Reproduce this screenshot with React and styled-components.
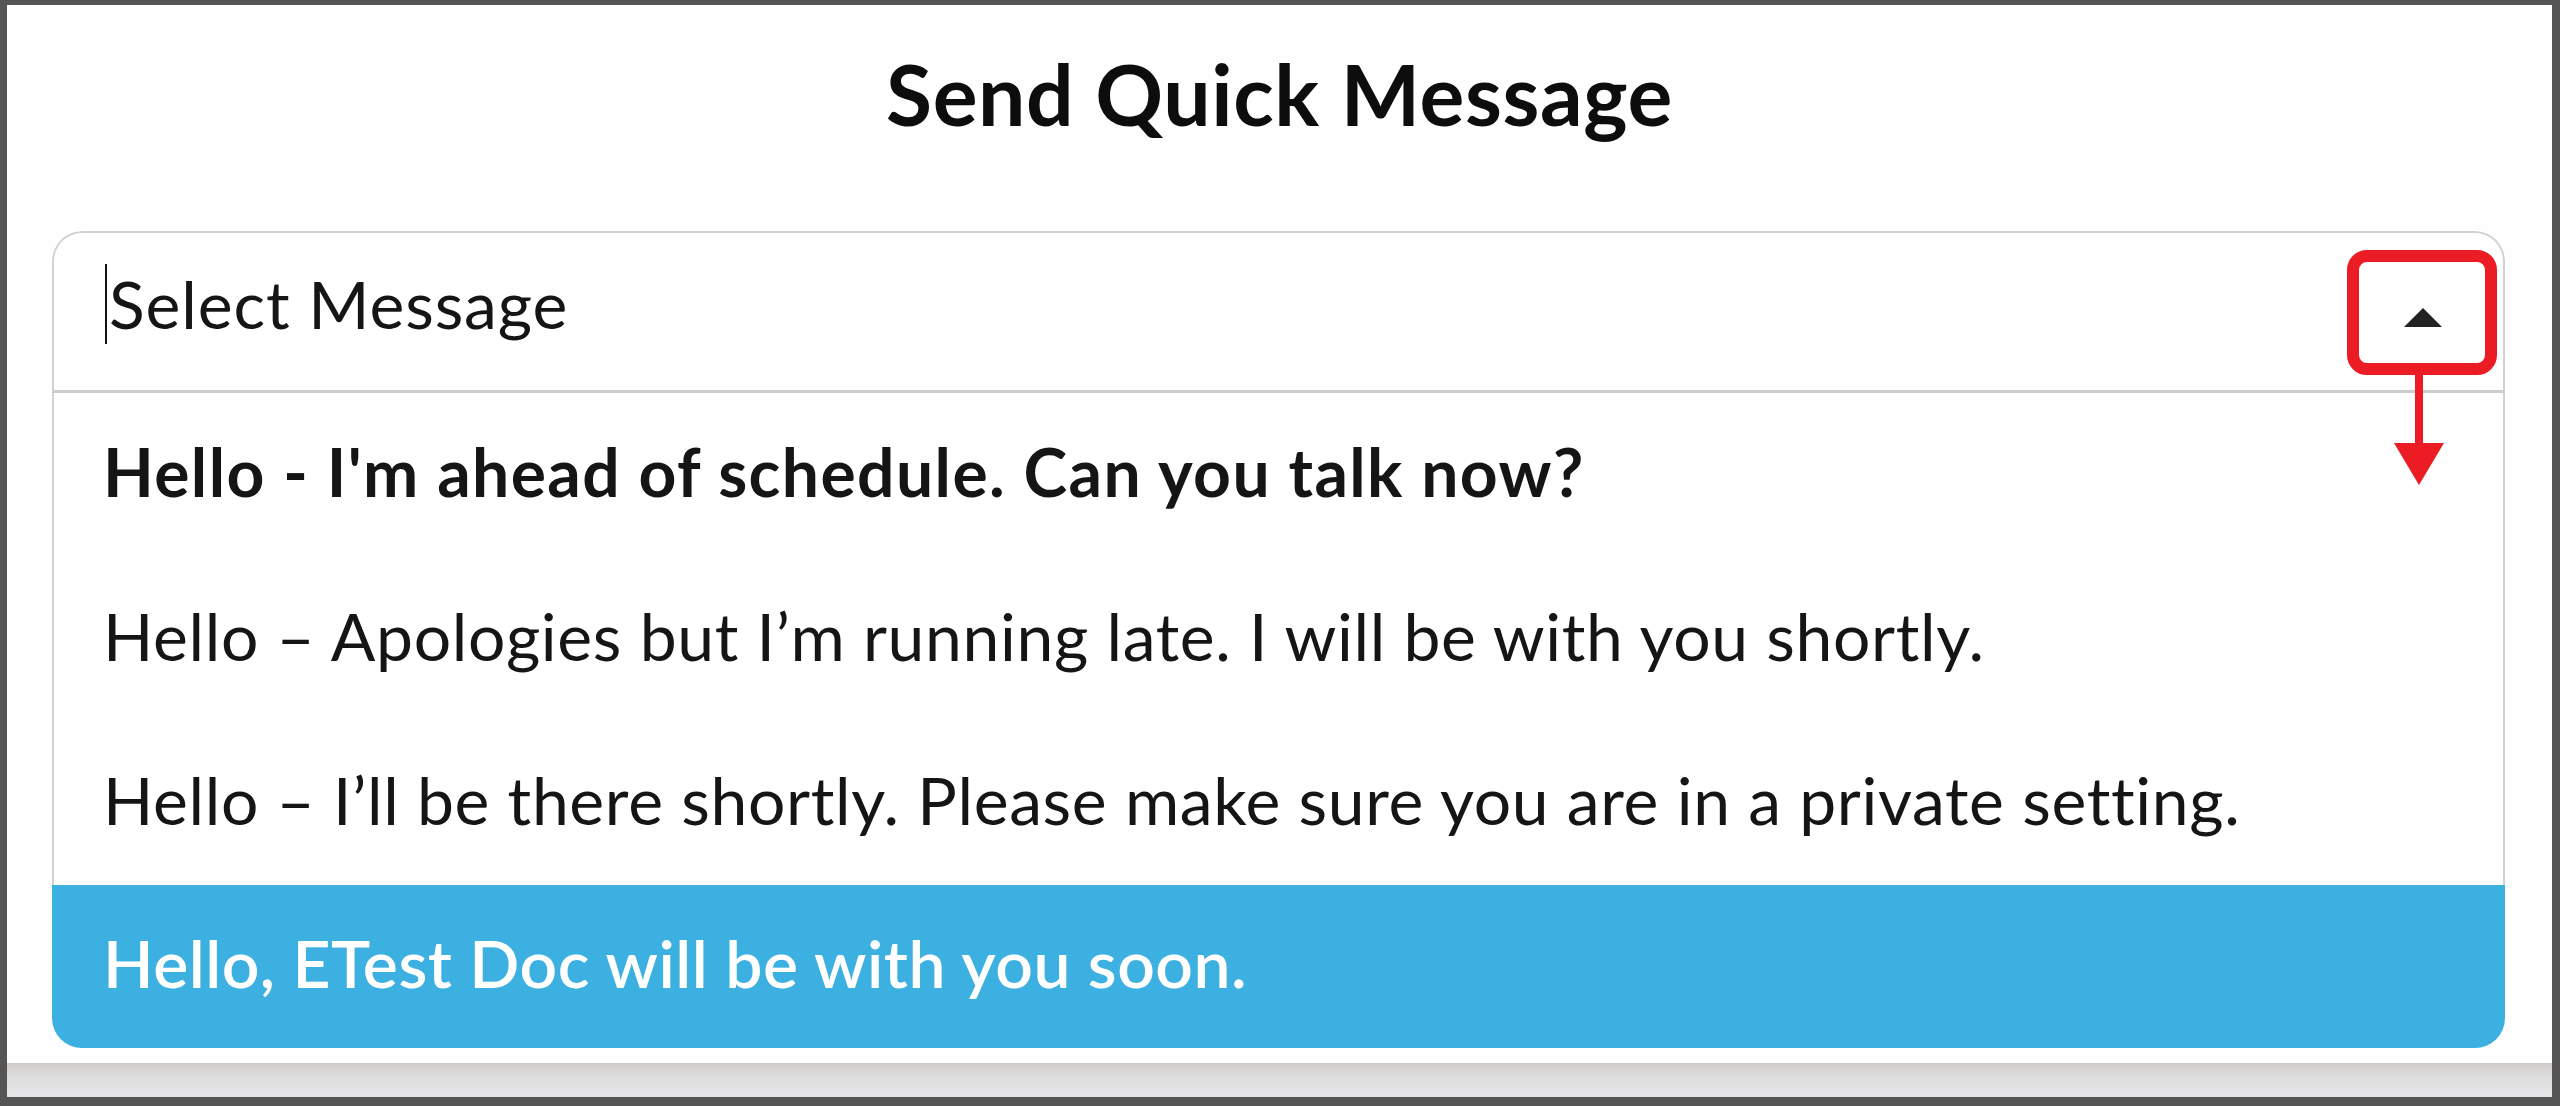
import React from "react";
import styled, { createGlobalStyle } from "styled-components";

const Global = createGlobalStyle`
  html, body { margin: 0; padding: 0; background: #ffffff; }
  * { box-sizing: border-box; }
`;

const Frame = styled.div`
  width: 2560px;
  height: 1106px;
  border-style: solid;
  border-color: #555555;
  border-width: 5px 8px 9px 7px;
  background: #fefefe;
  display: flex;
  flex-direction: column;
  font-family: Lato, "Noto Sans", sans-serif;
  color: #151515;
`;

const Title = styled.h1`
  margin: 0;
  padding-top: 47px;
  font-size: 84px;
  line-height: 84px;
  font-weight: 700;
  letter-spacing: 0.6px;
  text-align: center;
  color: #0d0d0d;
`;

const Wrapper = styled.div`
  position: relative;
  margin: 95px 47px 0 45px;
`;

const Dropdown = styled.div`
  border-radius: 30px;
  overflow: hidden;
  display: flex;
  flex-direction: column;
  background: #ffffff;
`;

const Header = styled.div`
  height: 162px;
  border: 2px solid #d2d2d2;
  border-bottom: 3px solid #cdcdcd;
  border-radius: 30px 30px 0 0;
  display: flex;
  align-items: center;
  justify-content: space-between;
  padding: 0 61px 0 51px;
`;

const InputText = styled.div`
  display: flex;
  align-items: center;
  font-size: 66px;
  letter-spacing: 0.9px;
  color: #151515;
  padding-bottom: 16px;
`;

const Cursor = styled.span`
  display: inline-block;
  width: 2px;
  height: 80px;
  background: #111111;
  margin-right: 2px;
`;

const Caret = styled.span`
  width: 0;
  height: 0;
  border-left: 19.5px solid transparent;
  border-right: 19.5px solid transparent;
  border-bottom: 19px solid #222222;
  margin-top: 12px;
`;

const Option = styled.div`
  height: ${(p) => p.$h}px;
  display: flex;
  align-items: center;
  padding: 0 0 8px ${(p) => (p.$active ? 51 : 49)}px;
  font-size: 66px;
  font-weight: ${(p) => (p.$bold ? 700 : p.$active ? 600 : 400)};
  letter-spacing: ${(p) => (p.$bold ? 1.4 : p.$active ? 0.5 : 0.65)}px;
  color: ${(p) => (p.$active ? "#ffffff" : "#151515")};
  background: ${(p) => (p.$active ? "#3db0e2" : "#ffffff")};
  border-left: ${(p) => (p.$active ? "none" : "2px solid #d2d2d2")};
  border-right: ${(p) => (p.$active ? "none" : "2px solid #d2d2d2")};
`;

const RedBox = styled.div`
  position: absolute;
  left: 2295px;
  top: 19px;
  width: 150px;
  height: 125px;
  border: 12px solid #ec1c24;
  border-radius: 20px;
`;

const Arrow = styled.svg`
  position: absolute;
  left: 2342px;
  top: 140px;
`;

const Band = styled.div`
  margin-top: auto;
  height: 34px;
  background: linear-gradient(#cfcac8, #dcdcdc 35%, #e8e6e9);
`;

const options = [
  { text: "Hello - I'm ahead of schedule. Can you talk now?", bold: true, h: 164 },
  { text: "Hello – Apologies but I’m running late. I will be with you shortly.", h: 164 },
  { text: "Hello – I’ll be there shortly. Please make sure you are in a private setting.", h: 164 },
  { text: "Hello, ETest Doc will be with you soon.", active: true, h: 163 },
];

export default function App() {
  return (
    <>
      <Global />
      <Frame>
        <Title>Send Quick Message</Title>
        <Wrapper>
          <Dropdown>
            <Header>
              <InputText>
                <Cursor />
                Select Message
              </InputText>
              <Caret />
            </Header>
            {options.map((o) => (
              <Option key={o.text} $bold={o.bold} $active={o.active} $h={o.h}>
                {o.text}
              </Option>
            ))}
          </Dropdown>
          <RedBox />
          <Arrow width="50" height="116" viewBox="0 0 50 116">
            <rect x="21" y="0" width="8" height="76" fill="#ec1c24" />
            <polygon points="0,72 50,72 25,114" fill="#ec1c24" />
          </Arrow>
        </Wrapper>
        <Band />
      </Frame>
    </>
  );
}
